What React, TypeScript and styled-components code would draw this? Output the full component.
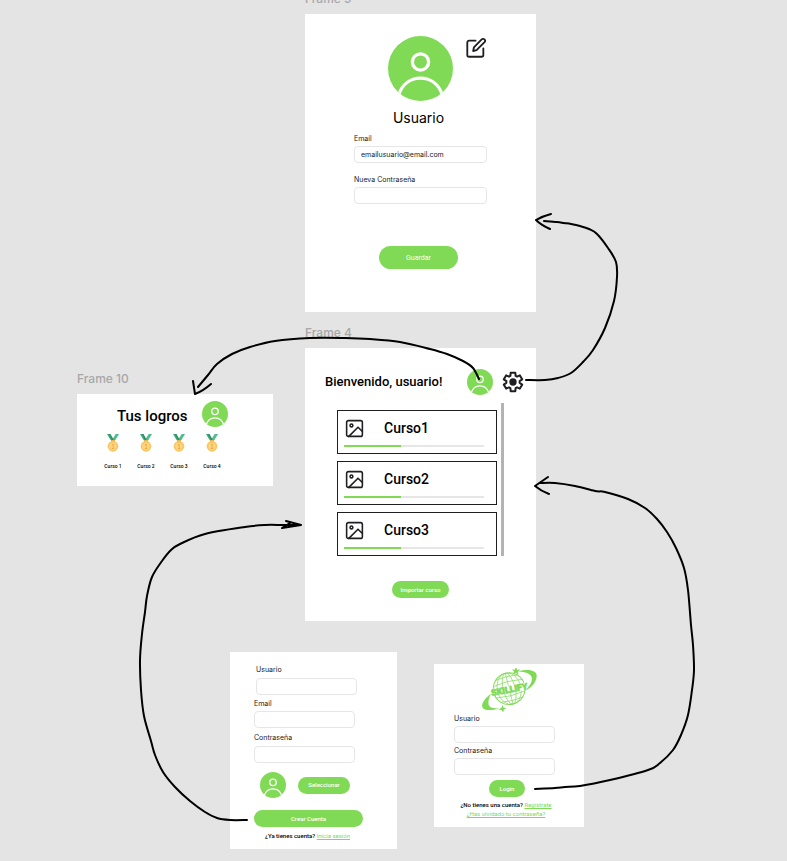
import React, { useId } from "react";
import styled, { createGlobalStyle } from "styled-components";

const GREEN = "#80da56";
const INK = "#1f1f23";
const INTER = `Inter, "Liberation Sans", sans-serif`;
const ROBOTO = `Roboto, "Liberation Sans", sans-serif`;

const GlobalStyle = createGlobalStyle`
  *, *::before, *::after { box-sizing: border-box; }
  body { margin: 0; background: #e4e4e4; font-family: ${INTER}; color: #000; }
  h1, h2, p, ul { margin: 0; padding: 0; }
  button { border: 0; margin: 0; font: inherit; cursor: pointer; }
`;

/* ---------- canvas ---------- */

const Canvas = styled.main`
  position: relative;
  min-height: 100vh;
  overflow: hidden;
  background: #e4e4e4;
`;

const Node = styled.section<{ $x: number; $y: number; $w: number }>`
  position: absolute;
  left: ${(p) => p.$x}px;
  top: ${(p) => p.$y}px;
  width: ${(p) => p.$w}px;
`;

const NodeLabel = styled.h2`
  position: absolute;
  left: 0;
  bottom: 100%;
  padding-bottom: 7px;
  font: 500 12px/16px ${INTER};
  color: #a8a8a8;
  white-space: nowrap;
`;

const Sheet = styled.div<{ $pad: string }>`
  display: flex;
  flex-direction: column;
  padding: ${(p) => p.$pad};
  background: #fff;
`;

const Arrows = styled.svg`
  position: absolute;
  left: 0;
  top: 0;
  pointer-events: none;
`;

/* ---------- shared parts ---------- */

const AvatarSvg = styled.svg`
  display: block;
  flex: none;
`;

function Avatar({ size }: { size: number }) {
  const id = useId();
  return (
    <AvatarSvg width={size} height={size} viewBox="0 0 64 64" role="img" aria-label="Avatar">
      <clipPath id={id}>
        <circle cx="32" cy="32" r="32" />
      </clipPath>
      <circle cx="32" cy="32" r="32" fill={GREEN} />
      <g clipPath={`url(#${id})`} fill="none" stroke="#fff" strokeWidth="3.2">
        <circle cx="32" cy="25.500" r="8" />
        <path d="M10.500 58C14 47.500 22 41.500 32 41.500S50 47.500 53.500 58" />
      </g>
    </AvatarSvg>
  );
}

const IconButton = styled.button`
  display: flex;
  flex: none;
  padding: 0;
  background: none;
  color: ${INK};
`;

const Pill = styled.button<{ $w: number; $h?: number; $size?: number; $weight?: number }>`
  width: ${(p) => p.$w}px;
  height: ${(p) => p.$h ?? 17}px;
  flex: none;
  padding: 0;
  border-radius: 12px;
  background: ${GREEN};
  color: #fff;
  font: ${(p) => p.$weight ?? 500} ${(p) => p.$size ?? 6}px/8px ${ROBOTO};
`;

const FieldBox = styled.div<{ $gap?: number; $indent?: number }>`
  display: flex;
  flex-direction: column;
  gap: ${(p) => p.$gap ?? 2}px;
  margin-left: ${(p) => p.$indent ?? 0}px;
`;

const FieldLabel = styled.label`
  font: 400 7px/10px ${INTER};
  color: #222;
`;

const FieldInput = styled.input<{ $w: number }>`
  width: ${(p) => p.$w}px;
  height: 17px;
  padding: 0 6px;
  border: 1px solid #e6e6e6;
  border-radius: 4px;
  background: #fff;
  font: 400 7px/10px ${INTER};
  color: #222;
  outline: none;
`;

interface FieldProps {
  label: string;
  width: number;
  type?: string;
  value?: string;
  gap?: number;
  indent?: number;
}

function Field({ label, width, type = "text", value, gap, indent }: FieldProps) {
  const id = useId();
  return (
    <FieldBox $gap={gap} $indent={indent}>
      <FieldLabel htmlFor={id}>{label}</FieldLabel>
      <FieldInput id={id} type={type} defaultValue={value} $w={width} />
    </FieldBox>
  );
}

const Hint = styled.p`
  font: 500 6px/9px ${ROBOTO};
  text-align: center;
  white-space: nowrap;
`;

const Link = styled.a`
  font-weight: 400;
  color: ${GREEN};
  text-decoration: underline;
`;

const Centered = styled.div<{ $pad: string }>`
  display: flex;
  justify-content: center;
  padding: ${(p) => p.$pad};
`;

/* ---------- profile ---------- */

const ProfileTop = styled.div`
  display: grid;
  grid-template-columns: 1fr auto 1fr;
  align-items: start;
  column-gap: 12px;
  & > :nth-child(1) { grid-column: 2; }
  & > :nth-child(2) { grid-column: 3; margin-top: 1px; }
`;

const ProfileName = styled.h1`
  padding: 7px 4px 6px 0;
  font: 400 14px/20px ${INTER};
  text-align: center;
`;

const ProfileForm = styled.form`
  display: flex;
  flex-direction: column;
  gap: 12px;
  padding: 0 49px;
`;

function EditIcon() {
  return (
    <svg width="22" height="22" viewBox="0 0 24 24" fill="none" stroke="currentColor" strokeWidth="2" strokeLinecap="round" strokeLinejoin="round">
      <path d="M11.500 4H4.500A2 2 0 0 0 2.500 6V19.500A2 2 0 0 0 4.500 21.500H18A2 2 0 0 0 20 19.500V12.500" />
      <path d="M18.200 2.700A2 2 0 0 1 21.300 5.600L12.600 14.300L8.900 15.300L9.700 11.400Z" />
    </svg>
  );
}

function Profile() {
  return (
    <Node $x={305} $y={14} $w={231}>
      <NodeLabel>Frame 9</NodeLabel>
      <Sheet $pad="22px 0 43px">
        <ProfileTop>
          <Avatar size={65} />
          <IconButton type="button" aria-label="Editar perfil"><EditIcon /></IconButton>
        </ProfileTop>
        <ProfileName>Usuario</ProfileName>
        <ProfileForm>
          <Field label="Email" type="email" value="emailusuario@email.com" width={133} />
          <Field label="Nueva Contraseña" type="password" width={133} />
        </ProfileForm>
        <Centered $pad="42px 4px 0 0">
          <Pill type="button" $w={79} $h={23} $size={7} $weight={400}>Guardar</Pill>
        </Centered>
      </Sheet>
    </Node>
  );
}

/* ---------- home ---------- */

const HomeHeader = styled.header`
  display: flex;
  align-items: center;
  padding: 0 12px 0 20px;
  & > h1 { flex: 1; }
  & > button { margin-left: 9px; }
`;

const HomeTitle = styled.h1`
  font: 500 13px/20px ${ROBOTO};
  white-space: nowrap;
`;

const CourseList = styled.ul`
  display: flex;
  flex-direction: column;
  gap: 7px;
  margin: 8px 32px 0 32px;
  padding: 7px 4px 0 0;
  border-right: 3px solid #b3b3b3;
  list-style: none;
`;

const CourseCard = styled.li`
  display: flex;
  flex-direction: column;
  gap: 7px;
  height: 44px;
  padding: 7px 12px 0 6px;
  border: 1px solid ${INK};
`;

const CourseRow = styled.div`
  display: flex;
  align-items: center;
  gap: 19px;
  height: 20px;
  font: 500 14px/20px ${ROBOTO};
`;

const Track = styled.div`
  height: 2px;
  background: #e6e6e6;
`;

const Fill = styled.div`
  height: 100%;
  background: ${GREEN};
`;

function GearIcon() {
  const point = (r: number, deg: number) => {
    const a = (deg * Math.PI) / 180;
    return `${(12 + r * Math.sin(a)).toFixed(2)} ${(12 - r * Math.cos(a)).toFixed(2)}`;
  };
  const points: string[] = [];
  for (let t = 0; t < 360; t += 60) {
    points.push(point(7.3, t - 23), point(10.4, t - 14), point(10.4, t + 14), point(7.3, t + 23));
  }
  return (
    <svg width="22" height="22" viewBox="0 0 24 24" fill="none" stroke="currentColor" strokeWidth="2.200" strokeLinejoin="round">
      <path d={`M${points.join("L")}Z`} />
      <circle cx="12" cy="12" r="4" fill="currentColor" stroke="none" />
    </svg>
  );
}

function PictureIcon() {
  return (
    <svg width="21" height="21" viewBox="0 0 24 24" fill="none" stroke={INK} strokeWidth="1.800" strokeLinejoin="round" strokeLinecap="round">
      <rect x="3" y="3" width="18" height="18" rx="2" />
      <circle cx="8.500" cy="8.500" r="1.600" />
      <path d="M21 15.500L16 10.500L5.500 21" />
    </svg>
  );
}

const courses = [
  { name: "Curso1", done: 41 },
  { name: "Curso2", done: 41 },
  { name: "Curso3", done: 41 },
];

function Home() {
  return (
    <Node $x={305} $y={348} $w={231}>
      <NodeLabel>Frame 4</NodeLabel>
      <Sheet $pad="21px 0 23px">
        <HomeHeader>
          <HomeTitle>Bienvenido, usuario!</HomeTitle>
          <Avatar size={26} />
          <IconButton type="button" aria-label="Ajustes"><GearIcon /></IconButton>
        </HomeHeader>
        <CourseList>
          {courses.map((c) => (
            <CourseCard key={c.name}>
              <CourseRow><PictureIcon />{c.name}</CourseRow>
              <Track role="progressbar" aria-label={c.name} aria-valuenow={c.done}>
                <Fill style={{ width: `${c.done}%` }} />
              </Track>
            </CourseCard>
          ))}
        </CourseList>
        <Centered $pad="25px 0 0">
          <Pill type="button" $w={57}>Importar curso</Pill>
        </Centered>
      </Sheet>
    </Node>
  );
}

/* ---------- achievements ---------- */

const AwardsHeader = styled.header`
  display: flex;
  align-items: center;
  gap: 14px;
  padding-left: 40px;
`;

const AwardsTitle = styled.h1`
  padding-top: 4px;
  font: 500 15px/20px ${ROBOTO};
`;

const AwardList = styled.ul`
  display: flex;
  gap: 3px;
  padding: 7px 0 0 21px;
  list-style: none;
`;

const Award = styled.li`
  display: flex;
  flex-direction: column;
  align-items: center;
  gap: 10px;
  width: 30px;
  font: 500 5px/8px ${ROBOTO};
`;

function Medal() {
  return (
    <svg width="12" height="18" viewBox="0 0 36 54" aria-hidden="true">
      <path d="M0 0H10L20 18L14 23Z" fill="#3aa87a" />
      <path d="M26 0H36L22 23L15 18Z" fill="#4fbd8c" />
      <path d="M6 0H10L20 18L17 21Z" fill="#2b8f68" />
      <rect x="12" y="18" width="12" height="6" rx="2" fill="#f0b64a" />
      <circle cx="18" cy="37" r="16" fill="#f8c665" />
      <circle cx="18" cy="37" r="11" fill="#ffd581" />
      <path d="M14.500 33L18.500 30.500V43M14.500 43.500H22" fill="none" stroke="#e9a53c" strokeWidth="2.500" />
    </svg>
  );
}

function Awards() {
  return (
    <Node $x={77} $y={394} $w={196}>
      <NodeLabel>Frame 10</NodeLabel>
      <Sheet $pad="7px 0 16px">
        <AwardsHeader>
          <AwardsTitle>Tus logros</AwardsTitle>
          <Avatar size={26} />
        </AwardsHeader>
        <AwardList>
          {[1, 2, 3, 4].map((n) => (
            <Award key={n}><Medal /><span>Curso {n}</span></Award>
          ))}
        </AwardList>
      </Sheet>
    </Node>
  );
}

/* ---------- sign up ---------- */

const SignUpForm = styled.form`
  display: flex;
  flex-direction: column;
`;

const PictureRow = styled.div`
  display: flex;
  align-items: center;
  gap: 12px;
  padding: 9px 0 12px 6px;
`;

const Stack = styled.div<{ $gap: number }>`
  display: flex;
  flex-direction: column;
  gap: ${(p) => p.$gap}px;
`;

function SignUp() {
  return (
    <Node $x={230} $y={652} $w={167}>
      <Sheet $pad="13px 34px 9px 24px">
        <SignUpForm>
          <Stack $gap={4}>
            <Field label="Usuario" width={101} gap={3} indent={2} />
            <Stack $gap={5}>
              <Field label="Email" type="email" width={101} />
              <Field label="Contraseña" type="password" width={101} gap={3} />
            </Stack>
          </Stack>
          <PictureRow>
            <Avatar size={26} />
            <Pill type="button" $w={52}>Seleccionar</Pill>
          </PictureRow>
          <Pill type="button" $w={109}>Crear Cuenta</Pill>
        </SignUpForm>
        <Centered $pad="4px 2px 0 0">
          <Hint>¿Ya tienes cuenta? <Link href="#login">Inicia sesión</Link></Hint>
        </Centered>
      </Sheet>
    </Node>
  );
}

/* ---------- login ---------- */

function Logo() {
  return (
    <svg width="57" height="44" viewBox="16 26 172 132" role="img" aria-label="Skillify">
      <g fill="none" stroke={GREEN} strokeWidth="2" transform="rotate(-14 101 88)">
        <circle cx="101" cy="88" r="48" strokeWidth="3" />
        <ellipse cx="101" cy="88" rx="36" ry="48" />
        <ellipse cx="101" cy="88" rx="18" ry="48" />
        <path d="M101 40V136M57 70Q101 62 145 70M66 54Q101 48 136 54M57 106Q101 114 145 106M66 122Q101 128 136 122" />
      </g>
      <g fill={GREEN}>
        <path d="M128 36C160 27 186 33 184 51C182 70 168 86 148 94C162 82 172 66 169 54C166 42 150 37 128 36Z" />
        <path d="M46 104C30 114 16 132 20 144C25 156 52 154 75 147C55 149 41 146 39 136C37 126 40 114 46 104Z" />
        <path d="M121 22L125 31L135 30L127 37L129 46L121 40L113 45L116 36L109 30L118 31Z" />
        <path d="M81 137L84 145L93 147L85 151L83 160L78 152L69 151L77 146Z" />
      </g>
      <g transform="rotate(-11 101 90)" textAnchor="middle" fill={GREEN} fontFamily={ROBOTO} fontWeight="900" fontSize="27" strokeLinejoin="round">
        <rect x="48" y="79" width="106" height="22" fill="#fff" />
        <text x="101" y="100" stroke={GREEN} strokeWidth="2">SKILLIFY</text>
      </g>
    </svg>
  );
}

const LoginForm = styled.form`
  display: flex;
  flex-direction: column;
  gap: 3px;
  padding: 2px 0 0 20px;
`;

function Login() {
  return (
    <Node $x={434} $y={664} $w={150} id="login">
      <Sheet $pad="4px 0 9px">
        <Centered $pad="0"><Logo /></Centered>
        <LoginForm>
          <Field label="Usuario" width={101} />
          <Field label="Contraseña" type="password" width={101} />
        </LoginForm>
        <Centered $pad="5px 4px 3px 0">
          <Pill type="button" $w={36}>Login</Pill>
        </Centered>
        <Centered $pad="0 6px 0 0">
          <Hint>
            ¿No tienes una cuenta? <Link href="#registro">Regístrate</Link>
            <br />
            <Link href="#recuperar">¿Has olvidado tu contraseña?</Link>
          </Hint>
        </Centered>
      </Sheet>
    </Node>
  );
}

/* ---------- arrows ---------- */

type Point = [number, number];

function smooth(p: Point[]) {
  let d = `M${p[0][0]} ${p[0][1]}`;
  for (let i = 0; i < p.length - 1; i++) {
    const a = p[i - 1] ?? p[i];
    const b = p[i];
    const c = p[i + 1];
    const e = p[i + 2] ?? c;
    d += `C${b[0] + (c[0] - a[0]) / 6} ${b[1] + (c[1] - a[1]) / 6} ${c[0] - (e[0] - b[0]) / 6} ${c[1] - (e[1] - b[1]) / 6} ${c[0]} ${c[1]}`;
  }
  return d;
}

const strokes: { line: Point[]; head: string }[] = [
  {
    line: [[526, 380], [545, 380], [558, 378], [571, 373], [583, 362], [593, 350], [605, 328], [614, 301], [617, 277], [616, 262], [608, 248], [597, 234], [589, 229], [580, 226], [571, 224], [564, 223], [557, 222], [544, 221]],
    head: "M551 214Q543 216 536 220Q541 225 550 229",
  },
  {
    line: [[479, 379], [473, 368], [463, 361], [447, 354], [430, 349], [400, 342], [370, 339], [345, 338], [310, 338], [275, 341], [250, 347], [232, 354], [217, 364], [208, 375], [198, 387]],
    head: "M193 381L195 394Q203 391 211 384",
  },
  {
    line: [[247, 820], [230, 820], [217, 818], [205, 812], [190, 801], [175, 787], [163, 772], [155, 755], [151, 741], [144, 716], [141, 690], [140, 660], [142, 634], [145, 612], [147, 596], [152, 577], [162, 561], [171, 550], [180, 544], [205, 534], [245, 527], [265, 525], [283, 525], [298, 525]],
    head: "M286 521L301 525L282 528L290 523",
  },
  {
    line: [[535, 789], [555, 788], [565, 787], [580, 786], [610, 780], [648, 770], [660, 763], [673, 750], [681, 735], [688, 715], [692, 690], [694, 670], [693, 645], [691, 625], [688, 590], [684, 568], [676, 548], [667, 532], [657, 519], [645, 508], [628, 499], [605, 492], [595, 491], [575, 486], [555, 483], [540, 483]],
    head: "M548 477L535 486Q541 491 549 494",
  },
];

export default function App() {
  return (
    <>
      <GlobalStyle />
      <Canvas>
        <Profile />
        <Home />
        <Awards />
        <SignUp />
        <Login />
        <Arrows width="700" height="830" viewBox="0 0 700 830" fill="none" stroke="#000" strokeWidth="2" strokeLinecap="round" strokeLinejoin="round" aria-hidden="true">
          {strokes.map((s) => (
            <path key={s.head} d={smooth(s.line) + s.head} />
          ))}
        </Arrows>
      </Canvas>
    </>
  );
}
